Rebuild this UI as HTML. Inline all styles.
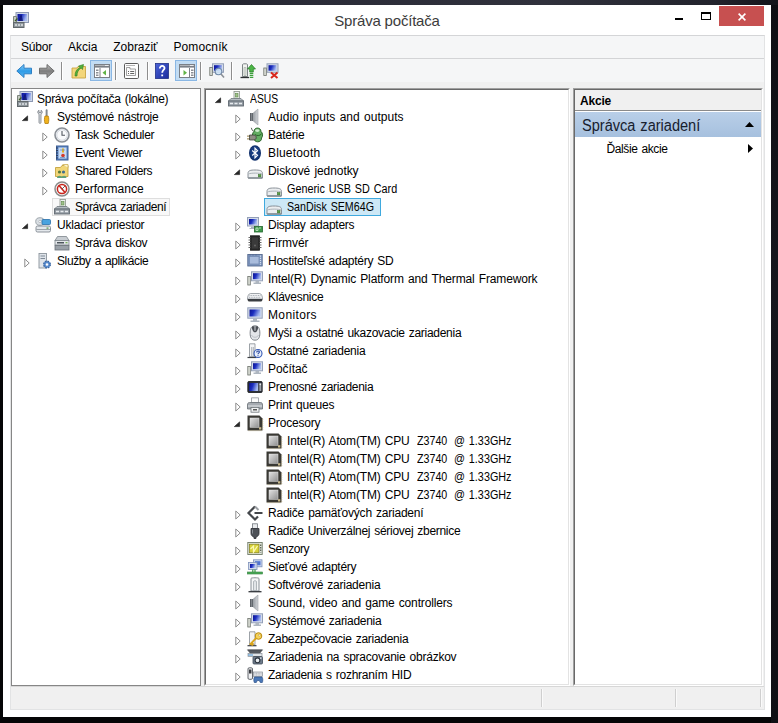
<!DOCTYPE html>
<html lang="sk"><head><meta charset="utf-8"><title>Správa počítača</title>
<style>
html,body{margin:0;padding:0}
body{width:778px;height:723px;overflow:hidden;position:relative;background:#131313;font-family:"Liberation Sans",sans-serif;font-size:12px;color:#000}
body>*,.g>*{position:absolute;box-sizing:border-box}
.g{left:0;top:0;width:0;height:0;overflow:visible}
.bgtex{left:0;top:0;width:778px;height:723px;background:
 linear-gradient(90deg,#0c0c10 0,#1a1b24 12%,#2b2c38 40%,#30313c 70%,#22232c 92%,#14141a 100%) 0 0/778px 5px no-repeat,
 linear-gradient(#0e0e13,#16161d 40%,#0f0f14) 771px 0/7px 723px no-repeat,
 #050506}
.win{left:3px;top:5px;width:768px;height:712px;background:#fff}
.client{left:10px;top:35px;width:755px;height:675px;background:#f0f0f0;border:1px solid #e2e3e4;border-top-color:#d4d5d7}
.menubar{left:11px;top:36px;width:753px;height:22px;background:#f5f6f7}
.menuline{left:11px;top:58px;width:753px;height:1px;background:#d3d4d6}
.toolbar{left:11px;top:59px;width:753px;height:23px;background:#f5f6f7}
.t{white-space:nowrap;line-height:18px;height:18px;font-size:12px;word-spacing:1px}
.mn{font-size:12px}
.ic{position:absolute;overflow:visible}
.pane{background:#fff;border:1px solid #868686}
.pane2{background:#fff;border:1px solid;border-color:#a0a0a0 #fff #fff #a0a0a0}
.pane2>div{width:100%;height:100%;box-sizing:border-box;border:1px solid;border-color:#696969 #e3e3e3 #e3e3e3 #696969}
.selg{background:#f8f8f8;border:1px solid #dedede}
.selb{background:#cde8f6;border:1px solid #3fa9de}
.tbsel{background:#c2dcf3;border:1px solid #8ab7e4}
.tbsep{top:62px;width:1px;height:18px;background:#8d8d8d;box-shadow:1px 0 0 #fff}
.title{left:201px;top:11px;width:372px;text-align:center;font-size:15px;line-height:20px;color:#3c3c3c;white-space:nowrap}
.close{left:719px;top:6px;width:45px;height:20px;background:#c75050}
.ahead{left:575px;top:90px;width:186px;height:22px;background:#f0f0f0;border-bottom:1px solid #fff}
.ahead:after{content:"";position:absolute;left:0;right:0;bottom:0;height:1px;background:#8a8a8a}
.ablue{left:575px;top:112px;width:186px;height:25px;background:linear-gradient(#b9cfe8,#a6c0de)}
.status{left:11px;top:686px;width:753px;height:23px;background:#f0f0f0;border-top:1px solid #d7d7d7}
.stsep{top:689px;width:1px;height:18px;background:#cfcfcf;box-shadow:1px 0 0 #fafafa}
</style></head><body>
<div class="bgtex"></div>
<div class="win"></div>
<svg style="left:0;top:0;width:0;height:0"><defs>
<linearGradient id="gb" x1="0" y1="0" x2="1" y2=".3"><stop offset="0" stop-color="#0c1290"/><stop offset=".45" stop-color="#1c2fc0"/><stop offset="1" stop-color="#a8bcf0"/></linearGradient>
<linearGradient id="gsp" x1="0" y1="0" x2="1" y2="0"><stop offset="0" stop-color="#9a9fa5"/><stop offset="1" stop-color="#d4d7db"/></linearGradient>
<linearGradient id="gg" x1="0" y1="0" x2="1" y2="1"><stop offset="0" stop-color="#e3e3e3"/><stop offset="1" stop-color="#8f8f8f"/></linearGradient>
<linearGradient id="gbl" x1="0" y1="0" x2="0" y2="1"><stop offset="0" stop-color="#8fd3fb"/><stop offset=".5" stop-color="#2f9be6"/><stop offset="1" stop-color="#58b6f2"/></linearGradient>
<linearGradient id="ggr" x1="0" y1="0" x2="0" y2="1"><stop offset="0" stop-color="#c4c4c4"/><stop offset=".5" stop-color="#7d7d7d"/><stop offset="1" stop-color="#a6a6a6"/></linearGradient>
<linearGradient id="gh" x1="0" y1="0" x2="1" y2="1"><stop offset="0" stop-color="#4a63d8"/><stop offset="1" stop-color="#1a2a9c"/></linearGradient>
</defs></svg>
<svg class="ic" style="left:13px;top:12px" width="16" height="16" viewBox="0 0 16 16"><rect x="3" y=".5" width="12.5" height="10" fill="#cfd7e8" stroke="#8d99b3"/><rect x="4.5" y="2" width="9.5" height="7" fill="url(#gb)"/><path d="M6 9c0-3 1-6 2.5-6.5L10 9z" fill="#0d1270" opacity=".8"/><path d="M.5 4.5h3v6h-3z" fill="#c3c9c0" stroke="#7d857c"/><path d="M2 9l2.5-2.5" stroke="#3a5a2a" stroke-width="1.2"/><rect x=".5" y="10.5" width="10.5" height="5" fill="#8f979c" stroke="#62696d"/><path d="M2 13h8" stroke="#dfe4e6" stroke-width="1.5" stroke-dasharray="2 1"/></svg>
<div class="title"><span id="ttl" style="letter-spacing:-0.2px">Správa počítača</span></div>
<div style="left:675px;top:18px;width:8px;height:2px;background:#000"></div>
<div style="left:701px;top:12px;width:10px;height:8px;border:1px solid #000;border-top-width:2px"></div>
<div class="close"></div>
<svg style="left:738px;top:12.5px" width="8" height="8" viewBox="0 0 8 8"><path d="M.6.6l6.8 6.8M7.4.6L.6 7.4" stroke="#fff" stroke-width="1.6"/></svg>
<div class="client"></div>
<div class="menubar"></div><div class="menuline"></div><div class="toolbar"></div>
<div class="g" role="menubar"><span id="mn0" class="t mn" style="left:21px;top:38px;letter-spacing:-0.208px;">Súbor</span><span id="mn1" class="t mn" style="left:68px;top:38px;letter-spacing:-0.011px;">Akcia</span><span id="mn2" class="t mn" style="left:113.3px;top:38px;letter-spacing:-0.031px;">Zobraziť</span><span id="mn3" class="t mn" style="left:173.4px;top:38px;letter-spacing:0.12px;">Pomocník</span></div>
<div class="g" role="toolbar">
<div class="tbsel" style="left:90px;top:60px;width:22px;height:21px"></div>
<div class="tbsel" style="left:175px;top:60px;width:22px;height:21px"></div>
<svg class="ic" style="left:16px;top:63px" width="16" height="16" viewBox="0 0 16 16"><path d="M8 1.5L.8 8 8 14.5v-3.7h7.5V5.2H8z" fill="url(#gbl)" stroke="#2d7fc4" stroke-width="1"/></svg>
<svg class="ic" style="left:39px;top:63px" width="16" height="16" viewBox="0 0 16 16"><path d="M8 1.5L15.2 8 8 14.5v-3.7H.5V5.2H8z" fill="url(#ggr)" stroke="#6d6d6d" stroke-width="1"/></svg>
<svg class="ic" style="left:71px;top:63px" width="16" height="16" viewBox="0 0 16 16"><path d="M1 5h5l1-1.5h7.5v11.5H1z" fill="#f3d67a" stroke="#c9a544" stroke-width=".9"/><path d="M4 13c0-4 1.5-7 5-8.5L7.5 3l5-1.5-1 5-1.3-1.5C7.5 6.5 6 9 6 13z" fill="#55b03c" stroke="#2e7d1e" stroke-width=".6"/></svg>
<svg class="ic" style="left:94px;top:63px" width="16" height="16" viewBox="0 0 16 16"><rect x=".5" y="1.5" width="15" height="13" fill="#fff" stroke="#7a7f86" stroke-width="1"/><path d="M1 3.5h14" stroke="#7a7f86" stroke-width="2.2"/><path d="M11 2.5h3.5" stroke="#e8eaec" stroke-width="1"/><path d="M6 5v9" stroke="#7a7f86" stroke-width="1"/><path d="M2 6.5h2.5v1.5H2zM2 9h2.5v1.5H2zM2 11.5h2.5v1.5H2z" fill="#8b9096"/><path d="M12 7v5.5L8.5 9.8z" fill="#5fb346"/></svg>
<svg class="ic" style="left:124px;top:63px" width="16" height="16" viewBox="0 0 16 16"><rect x=".5" y=".5" width="14" height="15" rx="1.2" fill="#fff" stroke="#5c5c5c"/><path d="M2 2.5h9" stroke="#b4b4b4"/><path d="M2.5 12.5v-8h3.5v1.5h5.5v6.5z" fill="#fbfbfb" stroke="#8a8a8a" stroke-width=".8"/><path d="M4 8.5h1M6.2 8.5h4M4 10.5h1M6.2 10.5h4" stroke="#666"/></svg>
<svg class="ic" style="left:154px;top:63px" width="16" height="16" viewBox="0 0 16 16"><rect x="1.5" y=".5" width="13" height="15" fill="url(#gh)" stroke="#1f2f86" stroke-width=".8"/><path d="M5.8 5.5c0-3.5 5-3.2 4.7-.2C10.3 7 8.3 7.2 8.2 9.8M8.2 11.5v1.8" stroke="#fff" stroke-width="1.8" fill="none"/></svg>
<svg class="ic" style="left:179px;top:63px" width="16" height="16" viewBox="0 0 16 16"><rect x=".5" y="1.5" width="15" height="13" fill="#fff" stroke="#7a7f86" stroke-width="1"/><path d="M1 3.5h14" stroke="#7a7f86" stroke-width="2.2"/><path d="M11 2.5h3.5" stroke="#e8eaec" stroke-width="1"/><path d="M10.5 5v9" stroke="#7a7f86" stroke-width="1"/><path d="M12 6.5h2.5v1.5H12zM12 9h2.5v1.5H12zM12 11.5h2.5v1.5H12z" fill="#8b9096"/><path d="M4.5 7v5.5L8 9.8z" fill="#5fb346"/></svg>
<svg class="ic" style="left:209px;top:63px" width="16" height="16" viewBox="0 0 16 16"><rect x="3.5" y=".8" width="11" height="8.5" fill="#d5dcea" stroke="#94a0b8"/><rect x="5" y="2.2" width="8" height="5.5" fill="url(#gb)"/><rect x=".8" y="4.5" width="2.5" height="8" fill="#dcdfd8" stroke="#6c716a" stroke-width=".8"/><circle cx="9.5" cy="8.5" r="3.3" fill="#cfe4f7" fill-opacity=".85" stroke="#6f89a8" stroke-width="1.1"/><path d="M12 11l3 3.5" stroke="#8a8f96" stroke-width="1.6"/></svg>
<svg class="ic" style="left:240px;top:63px" width="16" height="16" viewBox="0 0 16 16"><path d="M2.5 1.5c0-1 5-1 5 0v12h-5z" fill="#f1f3f1" stroke="#70787a" stroke-width=".9"/><path d="M4 4.5h2v8H4z" fill="#dfe3df" stroke="#9aa29a" stroke-width=".5"/><path d="M.5 14.5h8.5" stroke="#2e3134" stroke-width="1.3"/><path d="M11.5 1.5L7.5 6h2.2v3h3.6V6h2.2z" fill="#4cb648" stroke="#277a26" stroke-width=".7"/><path d="M9.7 10.3h3.6M9.7 12.3h3.6M9.7 14.3h3.6" stroke="#3aa03a" stroke-width="1.2"/></svg>
<svg class="ic" style="left:263px;top:63px" width="16" height="16" viewBox="0 0 16 16"><rect x="4" y=".8" width="11" height="8.5" fill="#d5dcea" stroke="#94a0b8"/><rect x="5.5" y="2.2" width="8" height="5.5" fill="url(#gb)"/><rect x=".8" y="5" width="2.5" height="7.5" fill="#dcdfd8" stroke="#6c716a" stroke-width=".8"/><path d="M8 9.5l6.5 5.5M14.5 9.5L8 15" stroke="#d8261c" stroke-width="2"/></svg>
<div class="tbsep" style="left:61px"></div>
<div class="tbsep" style="left:115px"></div>
<div class="tbsep" style="left:147px"></div>
<div class="tbsep" style="left:200px"></div>
<div class="tbsep" style="left:231px"></div>
</div>
<div class="pane" style="left:11px;top:88px;width:190px;height:598px"></div>
<div class="pane2" style="left:204px;top:88px;width:366px;height:598px"><div></div></div>
<div class="pane2" style="left:573px;top:88px;width:190px;height:598px"><div></div></div>
<div class="ahead"></div>
<span id="ak" class="t" style="left:580px;top:92px;letter-spacing:-0.208px;font-weight:bold;">Akcie</span>
<div class="ablue"></div>
<span id="ab" class="t" style="left:581.5px;top:116.5px;transform:scaleX(0.91);transform-origin:0 0;font-size:16px;color:#17202e;">Správca zariadení</span>
<svg style="left:745px;top:122px" width="9" height="5" viewBox="0 0 9 5"><path d="M0 5L4.5 0 9 5z" fill="#000"/></svg>
<span id="da" class="t" style="left:606.5px;top:140px;letter-spacing:-0.391px;">Ďalšie akcie</span>
<svg style="left:748px;top:144px" width="5" height="9" viewBox="0 0 5 9"><path d="M0 0l5 4.5-5 4.5z" fill="#000"/></svg>
<div class="g" role="tree">
<svg class="ic" style="left:17px;top:91px" width="16" height="16" viewBox="0 0 16 16"><rect x="3" y=".5" width="12.5" height="10" fill="#cfd7e8" stroke="#8d99b3"/><rect x="4.5" y="2" width="9.5" height="7" fill="url(#gb)"/><path d="M6 9c0-3 1-6 2.5-6.5L10 9z" fill="#0d1270" opacity=".8"/><path d="M.5 4.5h3v6h-3z" fill="#c3c9c0" stroke="#7d857c"/><path d="M2 9l2.5-2.5" stroke="#3a5a2a" stroke-width="1.2"/><rect x=".5" y="10.5" width="10.5" height="5" fill="#8f979c" stroke="#62696d"/><path d="M2 13h8" stroke="#dfe4e6" stroke-width="1.5" stroke-dasharray="2 1"/></svg>
<span id="l0" class="t" style="left:37px;top:90px;letter-spacing:-0.27px;">Správa počítača (lokálne)</span>
<svg class="ic" style="left:22.3px;top:115.3px" width="6" height="6" viewBox="0 0 6 6"><path d="M5.6.9v4.7H.4z" fill="#262626" stroke="#262626" stroke-width=".7" stroke-linejoin="round"/></svg>
<svg class="ic" style="left:36px;top:109px" width="16" height="16" viewBox="0 0 16 16"><path d="M3 1.2c-1.6.8-1.8 3 0 4v8.3c0 1.2 2 1.2 2 0V5.2c1.8-1 1.6-3.2 0-4v2.3H3z" fill="#d6dade" stroke="#7c8288" stroke-width=".8"/><path d="M10 .8h1.2v6H10z" fill="#9aa0a6" stroke="#6a7076" stroke-width=".6"/><path d="M9 7h3.2c.8 2 .8 5 0 7.5H9c-.8-2.5-.8-5.5 0-7.5z" fill="#f0b21c" stroke="#b47c0a" stroke-width=".8"/></svg>
<span id="l1" class="t" style="left:57px;top:108px;letter-spacing:-0.282px;">Systémové nástroje</span>
<svg class="ic" style="left:42px;top:131.5px" width="7" height="10" viewBox="0 0 7 10"><path d="M.8 1l4.4 4-4.4 4z" fill="#fff" stroke="#8e8e8e" stroke-width="1" stroke-linejoin="round"/></svg>
<svg class="ic" style="left:54px;top:127px" width="16" height="16" viewBox="0 0 16 16"><circle cx="8" cy="8" r="7" fill="#eef1f5" stroke="#8a8f96" stroke-width="1.6"/><circle cx="8" cy="8" r="5.2" fill="#f9fafc" stroke="#c5cad2" stroke-width=".6"/><path d="M8 4v4.2h3" stroke="#50565e" stroke-width="1.1" fill="none"/></svg>
<span id="l2" class="t" style="left:75px;top:126px;letter-spacing:-0.265px;">Task Scheduler</span>
<svg class="ic" style="left:42px;top:149.5px" width="7" height="10" viewBox="0 0 7 10"><path d="M.8 1l4.4 4-4.4 4z" fill="#fff" stroke="#8e8e8e" stroke-width="1" stroke-linejoin="round"/></svg>
<svg class="ic" style="left:54px;top:145px" width="16" height="16" viewBox="0 0 16 16"><rect x="2.5" y="1" width="11.5" height="14" fill="#5b86c6" stroke="#3d5f96"/><rect x="4.5" y="2.5" width="8" height="11" fill="#c9dbf2"/><path d="M2 3h2M2 5.5h2M2 8h2M2 10.5h2M2 13h2" stroke="#2d3f5e" stroke-width="1"/><rect x="8" y="3.5" width="2" height="4" fill="#e9b21a"/><circle cx="9" cy="10.5" r="1.8" fill="#d43a2a"/><path d="M6 5h5M6 12.5h5" stroke="#6f8fbf" stroke-width=".8"/></svg>
<span id="l3" class="t" style="left:75px;top:144px;letter-spacing:-0.353px;">Event Viewer</span>
<svg class="ic" style="left:42px;top:167.5px" width="7" height="10" viewBox="0 0 7 10"><path d="M.8 1l4.4 4-4.4 4z" fill="#fff" stroke="#8e8e8e" stroke-width="1" stroke-linejoin="round"/></svg>
<svg class="ic" style="left:54px;top:163px" width="16" height="16" viewBox="0 0 16 16"><path d="M1.5 4.5h5l1.5-2h6v11h-12.5z" fill="#f1d678" stroke="#c4a340" stroke-width=".9"/><path d="M8.5 1.5h5.5v3" fill="#fbf3cf" stroke="#c4a340" stroke-width=".7"/><circle cx="5.5" cy="9" r="1.6" fill="#5a7a3a"/><circle cx="9.5" cy="9" r="1.6" fill="#3f6f8f"/><path d="M3 15c0-3 5-3 5 0zM7.5 15c0-3 5-3 5 0z" fill="#5fa07a"/></svg>
<span id="l4" class="t" style="left:75px;top:162px;letter-spacing:-0.419px;">Shared Folders</span>
<svg class="ic" style="left:42px;top:185.5px" width="7" height="10" viewBox="0 0 7 10"><path d="M.8 1l4.4 4-4.4 4z" fill="#fff" stroke="#8e8e8e" stroke-width="1" stroke-linejoin="round"/></svg>
<svg class="ic" style="left:54px;top:181px" width="16" height="16" viewBox="0 0 16 16"><circle cx="8" cy="8" r="7" fill="#f4f4f4" stroke="#8c8c8c" stroke-width="1.5"/><circle cx="8" cy="8" r="4.6" fill="#fff" stroke="#c8251c" stroke-width="1.5"/><path d="M5 4.5l6 7" stroke="#c8251c" stroke-width="1.6"/><path d="M8 8l3-3" stroke="#555" stroke-width=".9"/></svg>
<span id="l5" class="t" style="left:75px;top:180px;letter-spacing:-0.01px;">Performance</span>
<div class="selg" style="left:52px;top:198px;width:118px;height:18px"></div>
<svg class="ic" style="left:54px;top:199px" width="16" height="16" viewBox="0 0 16 16"><rect x="6" y=".5" width="5.5" height="7" fill="#eef1ee" stroke="#8a938a" stroke-width=".8"/><rect x="7.5" y="2.5" width="2.5" height="3.5" fill="#9fc08a" stroke="#5f8a4a" stroke-width=".6"/><path d="M3 7.5h10l2.5 2.5h-15z" fill="#b5bcc2" stroke="#70787e" stroke-width=".8"/><rect x=".5" y="10" width="15" height="5" fill="#9098a0" stroke="#626a72" stroke-width=".9"/><path d="M2 12.5h12" stroke="#e8ecef" stroke-width="1.3" stroke-dasharray="3 1.5"/></svg>
<span id="l6" class="t" style="left:75px;top:198px;letter-spacing:-0.383px;">Správca zariadení</span>
<svg class="ic" style="left:22.3px;top:223.3px" width="6" height="6" viewBox="0 0 6 6"><path d="M5.6.9v4.7H.4z" fill="#262626" stroke="#262626" stroke-width=".7" stroke-linejoin="round"/></svg>
<svg class="ic" style="left:35px;top:217px" width="16" height="16" viewBox="0 0 16 16"><ellipse cx="5" cy="4.5" rx="4.3" ry="3.8" fill="#d9dee3" stroke="#8d959c" stroke-width=".8"/><circle cx="5" cy="4.5" r="1.2" fill="#fff" stroke="#8d959c" stroke-width=".5"/><rect x="7" y="2.5" width="8.5" height="5" rx="1" fill="#4aa3df" stroke="#2a6fa8" stroke-width=".8"/><rect x="1" y="9" width="14.5" height="6" rx="1.5" fill="#e4e8ec" stroke="#7f878f" stroke-width=".9"/><path d="M1.5 12.5h13.5" stroke="#8b939b" stroke-width=".8"/><rect x="11.5" y="10.5" width="2" height="1.2" fill="#5c9a4a"/></svg>
<span id="l7" class="t" style="left:57px;top:216px;letter-spacing:-0.215px;">Ukladací priestor</span>
<svg class="ic" style="left:54px;top:235px" width="16" height="16" viewBox="0 0 16 16"><path d="M3.5 1.5h9l2.5 4h-14z" fill="#c8cdd2" stroke="#7d858c" stroke-width=".8"/><rect x="1" y="5.5" width="14" height="4.5" fill="#e3e6e9" stroke="#7d858c" stroke-width=".8"/><rect x="3" y="7" width="7" height="1.5" fill="#4d555c"/><rect x="11.5" y="7" width="2" height="1.3" fill="#76b05c"/><rect x="1" y="10.5" width="14" height="4.5" fill="#9aa1a8" stroke="#6a7279" stroke-width=".8"/></svg>
<span id="l8" class="t" style="left:75px;top:234px;letter-spacing:-0.315px;">Správa diskov</span>
<svg class="ic" style="left:23.5px;top:257.5px" width="7" height="10" viewBox="0 0 7 10"><path d="M.8 1l4.4 4-4.4 4z" fill="#fff" stroke="#8e8e8e" stroke-width="1" stroke-linejoin="round"/></svg>
<svg class="ic" style="left:36px;top:253px" width="16" height="16" viewBox="0 0 16 16"><rect x="3" y=".5" width="7.5" height="14.5" fill="#dfe4ea" stroke="#8c949c" stroke-width=".9"/><path d="M4.5 3h4.5M4.5 5.5h4.5" stroke="#7f8a96" stroke-width="1"/><circle cx="11" cy="11.5" r="3.3" fill="#5b8ed0" stroke="#3b68a4" stroke-width="1.4" stroke-dasharray="1.6 1"/><circle cx="11" cy="11.5" r="1.2" fill="#fff"/></svg>
<span id="l9" class="t" style="left:57px;top:252px;letter-spacing:-0.38px;">Služby a aplikácie</span>
</div>
<div class="g" role="tree">
<svg class="ic" style="left:214.8px;top:97.3px" width="6" height="6" viewBox="0 0 6 6"><path d="M5.6.9v4.7H.4z" fill="#262626" stroke="#262626" stroke-width=".7" stroke-linejoin="round"/></svg>
<svg class="ic" style="left:228px;top:91px" width="16" height="16" viewBox="0 0 16 16"><rect x="6" y=".5" width="5.5" height="7" fill="#eef1ee" stroke="#8a938a" stroke-width=".8"/><rect x="7.5" y="2.5" width="2.5" height="3.5" fill="#9fc08a" stroke="#5f8a4a" stroke-width=".6"/><path d="M3 7.5h10l2.5 2.5h-15z" fill="#b5bcc2" stroke="#70787e" stroke-width=".8"/><rect x=".5" y="10" width="15" height="5" fill="#9098a0" stroke="#626a72" stroke-width=".9"/><path d="M2 12.5h12" stroke="#e8ecef" stroke-width="1.3" stroke-dasharray="3 1.5"/></svg>
<span id="m0" class="t" style="left:249.5px;top:90px;transform:scaleX(0.86);transform-origin:0 0;">ASUS</span>
<svg class="ic" style="left:235px;top:113.5px" width="7" height="10" viewBox="0 0 7 10"><path d="M.8 1l4.4 4-4.4 4z" fill="#fff" stroke="#8e8e8e" stroke-width="1" stroke-linejoin="round"/></svg>
<svg class="ic" style="left:247px;top:109px" width="16" height="16" viewBox="0 0 16 16"><path d="M3 4h3.2v8H3z" fill="#5d6268"/><path d="M6.2 4L11 0v16L6.2 12z" fill="url(#gsp)" stroke="#8d9299" stroke-width=".5"/><path d="M4.5 4v8" stroke="#8a8f95" stroke-width=".8"/></svg>
<span id="m1" class="t" style="left:268px;top:108px;letter-spacing:0.021px;">Audio inputs and outputs</span>
<svg class="ic" style="left:235px;top:131.5px" width="7" height="10" viewBox="0 0 7 10"><path d="M.8 1l4.4 4-4.4 4z" fill="#fff" stroke="#8e8e8e" stroke-width="1" stroke-linejoin="round"/></svg>
<svg class="ic" style="left:247px;top:127px" width="16" height="16" viewBox="0 0 16 16"><path d="M4.3.8c.4 1.6 1 2.6 2.2 3.6" stroke="#2a3a2a" stroke-width=".8" fill="none"/><path d="M7 4.5c0-4.6 7-4.6 7 0 2 1.5 2 5 .5 6.5.5 5-7.5 5-7.5.5C5 10 5 6 7 4.5z" fill="#62ad62" stroke="#215a21" stroke-width=".9"/><ellipse cx="10.3" cy="3.6" rx="2.2" ry="1.3" fill="#cdeccd"/><path d="M8 7.5c2 1.5 4.5 1.5 6.5-.5" stroke="#215a21" stroke-width=".9" fill="none"/><path d="M0 9.2h3M0 11.8h3" stroke="#a8966a" stroke-width="1.2"/><path d="M2.5 8h3.5c2.2 0 3.2 1 3.2 2.5S8.2 13 6 13H2.5z" fill="#8e8e84" stroke="#34342e" stroke-width=".7"/></svg>
<span id="m2" class="t" style="left:268px;top:126px;letter-spacing:-0.239px;">Batérie</span>
<svg class="ic" style="left:235px;top:149.5px" width="7" height="10" viewBox="0 0 7 10"><path d="M.8 1l4.4 4-4.4 4z" fill="#fff" stroke="#8e8e8e" stroke-width="1" stroke-linejoin="round"/></svg>
<svg class="ic" style="left:247px;top:145px" width="16" height="16" viewBox="0 0 16 16"><ellipse cx="8" cy="8" rx="6" ry="7.8" fill="#10306c"/><ellipse cx="8" cy="7.5" rx="4.8" ry="6.3" fill="#173c80"/><path d="M5.2 5.5l5.3 4.8L8 12.8V3.2l2.5 2.5-5.3 4.8" stroke="#fff" stroke-width="1.15" fill="none" stroke-linejoin="miter"/></svg>
<span id="m3" class="t" style="left:268px;top:144px;letter-spacing:0.173px;">Bluetooth</span>
<svg class="ic" style="left:233.8px;top:169.3px" width="6" height="6" viewBox="0 0 6 6"><path d="M5.6.9v4.7H.4z" fill="#262626" stroke="#262626" stroke-width=".7" stroke-linejoin="round"/></svg>
<svg class="ic" style="left:247px;top:163px" width="16" height="16" viewBox="0 0 16 16"><path d="M1 10.5c0-3 2.5-3.5 7-3.5s7.5.5 7.5 3.5v4.5H1z" fill="#eceef0" stroke="#7f878e" stroke-width=".9"/><path d="M1.5 11c2-1.2 11.5-1.2 13.5 0" stroke="#a4abb2" stroke-width=".9" fill="none"/><rect x="1" y="14.3" width="14.5" height="1.5" rx=".7" fill="#858d94"/><rect x="11.3" y="11.5" width="2.7" height="2.4" fill="#5aa046" stroke="#3a6f2c" stroke-width=".5"/></svg>
<span id="m4" class="t" style="left:268px;top:162px;letter-spacing:-0.075px;">Diskové jednotky</span>
<svg class="ic" style="left:266px;top:181px" width="16" height="16" viewBox="0 0 16 16"><path d="M1 10.5c0-3 2.5-3.5 7-3.5s7.5.5 7.5 3.5v4.5H1z" fill="#eceef0" stroke="#7f878e" stroke-width=".9"/><path d="M1.5 11c2-1.2 11.5-1.2 13.5 0" stroke="#a4abb2" stroke-width=".9" fill="none"/><rect x="1" y="14.3" width="14.5" height="1.5" rx=".7" fill="#858d94"/><rect x="11.3" y="11.5" width="2.7" height="2.4" fill="#5aa046" stroke="#3a6f2c" stroke-width=".5"/></svg>
<span id="m5" class="t" style="left:287px;top:180px;transform:scaleX(0.9);transform-origin:0 0;">Generic USB SD Card</span>
<div class="selb" style="left:264px;top:198px;width:117px;height:18px"></div>
<svg class="ic" style="left:266px;top:199px" width="16" height="16" viewBox="0 0 16 16"><path d="M1 10.5c0-3 2.5-3.5 7-3.5s7.5.5 7.5 3.5v4.5H1z" fill="#eceef0" stroke="#7f878e" stroke-width=".9"/><path d="M1.5 11c2-1.2 11.5-1.2 13.5 0" stroke="#a4abb2" stroke-width=".9" fill="none"/><rect x="1" y="14.3" width="14.5" height="1.5" rx=".7" fill="#858d94"/><rect x="11.3" y="11.5" width="2.7" height="2.4" fill="#5aa046" stroke="#3a6f2c" stroke-width=".5"/></svg>
<span id="m6" class="t" style="left:287px;top:198px;transform:scaleX(0.89);transform-origin:0 0;">SanDisk SEM64G</span>
<svg class="ic" style="left:235px;top:221.5px" width="7" height="10" viewBox="0 0 7 10"><path d="M.8 1l4.4 4-4.4 4z" fill="#fff" stroke="#8e8e8e" stroke-width="1" stroke-linejoin="round"/></svg>
<svg class="ic" style="left:247px;top:217px" width="16" height="16" viewBox="0 0 16 16"><rect x=".5" y=".5" width="11" height="8.5" fill="#d5dcea" stroke="#94a0b8"/><rect x="2" y="2" width="8" height="5.5" fill="url(#gb)"/><path d="M4 9.5h4v1.5H4zM2.5 11h7v1h-7z" fill="#aab2bc"/><rect x="7.5" y="9.5" width="8" height="5.5" fill="#3f9a4c" stroke="#25662f" stroke-width=".8"/><path d="M9 11h2v2.5H9zM12 11h2" stroke="#cfeecf" stroke-width=".8" fill="none"/></svg>
<span id="m7" class="t" style="left:268px;top:216px;letter-spacing:-0.253px;">Display adapters</span>
<svg class="ic" style="left:235px;top:239.5px" width="7" height="10" viewBox="0 0 7 10"><path d="M.8 1l4.4 4-4.4 4z" fill="#fff" stroke="#8e8e8e" stroke-width="1" stroke-linejoin="round"/></svg>
<svg class="ic" style="left:247px;top:235px" width="16" height="16" viewBox="0 0 16 16"><rect x="3.5" y=".8" width="9" height="14.4" fill="#2a2a2a" stroke="#111" stroke-width=".8"/><path d="M1.5 2.5h2M1.5 5h2M1.5 7.5h2M1.5 10h2M1.5 12.5h2M12.5 2.5h2M12.5 5h2M12.5 7.5h2M12.5 10h2M12.5 12.5h2" stroke="#666" stroke-width="1.2"/><rect x="5" y="2.5" width="6" height="11" fill="#3a3a3a"/><circle cx="8" cy="10.5" r=".9" fill="#6a6a6a"/></svg>
<span id="m8" class="t" style="left:268px;top:234px;letter-spacing:-0.012px;">Firmvér</span>
<svg class="ic" style="left:235px;top:257.5px" width="7" height="10" viewBox="0 0 7 10"><path d="M.8 1l4.4 4-4.4 4z" fill="#fff" stroke="#8e8e8e" stroke-width="1" stroke-linejoin="round"/></svg>
<svg class="ic" style="left:247px;top:253px" width="16" height="16" viewBox="0 0 16 16"><rect x=".8" y="1.5" width="14.4" height="11.5" fill="#8098c0" stroke="#566a90" stroke-width=".9"/><rect x="2.5" y="3.5" width="9.5" height="7.5" fill="#a9bcdc" stroke="#6f86b0" stroke-width=".7"/><path d="M13.5 2.5v9.5" stroke="#d5deee" stroke-width="1.2" stroke-dasharray="1.2 1"/><path d="M3 1v1.5M6 1v1.5M9 1v1.5" stroke="#566a90" stroke-width="1"/></svg>
<span id="m9" class="t" style="left:268px;top:252px;letter-spacing:-0.271px;">Hostiteľské adaptéry SD</span>
<svg class="ic" style="left:235px;top:275.5px" width="7" height="10" viewBox="0 0 7 10"><path d="M.8 1l4.4 4-4.4 4z" fill="#fff" stroke="#8e8e8e" stroke-width="1" stroke-linejoin="round"/></svg>
<svg class="ic" style="left:247px;top:271px" width="16" height="16" viewBox="0 0 16 16"><rect x="4.5" y=".8" width="11" height="9" fill="#d5dcea" stroke="#94a0b8"/><rect x="6" y="2.2" width="8" height="6" fill="url(#gb)"/><path d="M8.5 10h3.5v1.5H8.5zM6.5 11.5h7.5v1.5h-7.5z" fill="#aeb6c0"/><rect x=".8" y="5.5" width="2.5" height="8.5" fill="#dcdfd8" stroke="#6c716a" stroke-width=".8"/></svg>
<span id="m10" class="t" style="left:268px;top:270px;letter-spacing:-0.143px;">Intel(R) Dynamic Platform and Thermal Framework</span>
<svg class="ic" style="left:235px;top:293.5px" width="7" height="10" viewBox="0 0 7 10"><path d="M.8 1l4.4 4-4.4 4z" fill="#fff" stroke="#8e8e8e" stroke-width="1" stroke-linejoin="round"/></svg>
<svg class="ic" style="left:247px;top:289px" width="16" height="16" viewBox="0 0 16 16"><path d="M3.5 4.5h9c2 0 3 3 3 5.5H.5c0-2.5 1-5.5 3-5.5z" fill="#f1f2f4" stroke="#8a9097" stroke-width=".8"/><path d="M2.5 6.5h11M2 8.3h12" stroke="#aab0b7" stroke-width="1" stroke-dasharray="1 .7"/><path d="M.5 10h15c0 2-1 2.5-2 2.5h-11c-1 0-2-.5-2-2.5z" fill="#3a3d41"/></svg>
<span id="m11" class="t" style="left:268px;top:288px;letter-spacing:-0.27px;">Klávesnice</span>
<svg class="ic" style="left:235px;top:311.5px" width="7" height="10" viewBox="0 0 7 10"><path d="M.8 1l4.4 4-4.4 4z" fill="#fff" stroke="#8e8e8e" stroke-width="1" stroke-linejoin="round"/></svg>
<svg class="ic" style="left:247px;top:307px" width="16" height="16" viewBox="0 0 16 16"><rect x=".8" y=".8" width="14.4" height="10.4" fill="#d5dcea" stroke="#94a0b8"/><rect x="2.5" y="2.5" width="11" height="7" fill="url(#gb)"/><path d="M6 11.5h4v2H6zM3.5 13.5h9v1.5h-9z" fill="#aeb6c0"/></svg>
<span id="m12" class="t" style="left:268px;top:306px;letter-spacing:0.369px;">Monitors</span>
<svg class="ic" style="left:235px;top:329.5px" width="7" height="10" viewBox="0 0 7 10"><path d="M.8 1l4.4 4-4.4 4z" fill="#fff" stroke="#8e8e8e" stroke-width="1" stroke-linejoin="round"/></svg>
<svg class="ic" style="left:247px;top:325px" width="16" height="16" viewBox="0 0 16 16"><path d="M8 .8c3.4 0 4.6 2.4 4.8 6 .3 4-.4 8.4-4.8 8.4S2.9 10.8 3.2 6.8C3.4 3.2 4.6.8 8 .8z" fill="#e4e6e9" stroke="#70767d" stroke-width=".9"/><path d="M5 1.6C4.6 4.2 6.3 7.2 8 7.2s3.4-3 3-5.6C10 1 6 1 5 1.6z" fill="#4a4e54"/><path d="M8 1.2v4.6" stroke="#d0d4d8" stroke-width="1"/><path d="M4.5 10c1 3 6 3 7 0" stroke="#b4b9bf" stroke-width=".8" fill="none"/></svg>
<span id="m13" class="t" style="left:268px;top:324px;letter-spacing:-0.282px;">Myši a ostatné ukazovacie zariadenia</span>
<svg class="ic" style="left:235px;top:347.5px" width="7" height="10" viewBox="0 0 7 10"><path d="M.8 1l4.4 4-4.4 4z" fill="#fff" stroke="#8e8e8e" stroke-width="1" stroke-linejoin="round"/></svg>
<svg class="ic" style="left:247px;top:343px" width="16" height="16" viewBox="0 0 16 16"><path d="M2.5.8h5.5v13h-5.5z" fill="#f3f4f6" stroke="#858b92" stroke-width=".8"/><path d="M4.5 4v9.5h2V4" fill="#d9dcdf" stroke="#9aa0a6" stroke-width=".6"/><path d="M.5 14.5h9" stroke="#3a3d41" stroke-width="1.2"/><circle cx="11" cy="10.5" r="4" fill="#eaf0fb" stroke="#3559b5" stroke-width="1.1"/><path d="M9.7 9.4c0-2 2.8-1.8 2.6-.2-.1.9-1.3 1-1.3 2M11 12.3v1" stroke="#2344a0" stroke-width="1.1" fill="none"/></svg>
<span id="m14" class="t" style="left:268px;top:342px;letter-spacing:-0.243px;">Ostatné zariadenia</span>
<svg class="ic" style="left:235px;top:365.5px" width="7" height="10" viewBox="0 0 7 10"><path d="M.8 1l4.4 4-4.4 4z" fill="#fff" stroke="#8e8e8e" stroke-width="1" stroke-linejoin="round"/></svg>
<svg class="ic" style="left:247px;top:361px" width="16" height="16" viewBox="0 0 16 16"><rect x="4.5" y=".8" width="11" height="9" fill="#d5dcea" stroke="#94a0b8"/><rect x="6" y="2.2" width="8" height="6" fill="url(#gb)"/><path d="M8.5 10h3.5v1.5H8.5zM6.5 11.5h7.5v1.5h-7.5z" fill="#aeb6c0"/><rect x=".8" y="5.5" width="2.5" height="8.5" fill="#dcdfd8" stroke="#6c716a" stroke-width=".8"/></svg>
<span id="m15" class="t" style="left:268px;top:360px;letter-spacing:-0.072px;">Počítač</span>
<svg class="ic" style="left:235px;top:383.5px" width="7" height="10" viewBox="0 0 7 10"><path d="M.8 1l4.4 4-4.4 4z" fill="#fff" stroke="#8e8e8e" stroke-width="1" stroke-linejoin="round"/></svg>
<svg class="ic" style="left:247px;top:379px" width="16" height="16" viewBox="0 0 16 16"><rect x=".8" y="2.5" width="14.4" height="11" rx="1" fill="#2d3038" stroke="#14161a" stroke-width=".8"/><rect x="2.2" y="4" width="9" height="8" fill="url(#gb)"/><rect x="12.3" y="4" width="2" height="8" fill="#9aa0a8"/><circle cx="13.3" cy="5.5" r=".8" fill="#e8e8e8"/></svg>
<span id="m16" class="t" style="left:268px;top:378px;letter-spacing:-0.304px;">Prenosné zariadenia</span>
<svg class="ic" style="left:235px;top:401.5px" width="7" height="10" viewBox="0 0 7 10"><path d="M.8 1l4.4 4-4.4 4z" fill="#fff" stroke="#8e8e8e" stroke-width="1" stroke-linejoin="round"/></svg>
<svg class="ic" style="left:247px;top:397px" width="16" height="16" viewBox="0 0 16 16"><path d="M4.5.8h7v5h-7z" fill="#fbfbfb" stroke="#90969c" stroke-width=".8"/><path d="M2.5 5.5h11c1.5 0 2 1 2 2.5v4h-15v-4c0-1.5.5-2.5 2-2.5z" fill="#a6abb1" stroke="#666c72" stroke-width=".8"/><path d="M1 9h14" stroke="#e0e3e6" stroke-width="1"/><rect x="4" y="10.5" width="8" height="4.7" fill="#f2f3f4" stroke="#6f757b" stroke-width=".8"/><path d="M6 12.8h4" stroke="#333" stroke-width="1.2"/></svg>
<span id="m17" class="t" style="left:268px;top:396px;letter-spacing:-0.163px;">Print queues</span>
<svg class="ic" style="left:233.8px;top:421.3px" width="6" height="6" viewBox="0 0 6 6"><path d="M5.6.9v4.7H.4z" fill="#262626" stroke="#262626" stroke-width=".7" stroke-linejoin="round"/></svg>
<svg class="ic" style="left:247px;top:415px" width="16" height="16" viewBox="0 0 16 16"><path d="M.5.5h12l3 3v12H.5z" fill="#3a3934"/><rect x="3" y="3" width="9" height="9.3" fill="url(#gg)" stroke="#e6e6e6" stroke-width=".5"/><rect x="12" y="12.2" width="2.3" height="2.3" fill="#c9b98a"/><path d="M1.5 15.7h13M15.7 4v11" stroke="#b5a775" stroke-width=".7" stroke-dasharray="1 1"/></svg>
<span id="m18" class="t" style="left:268px;top:414px;letter-spacing:-0.179px;">Procesory</span>
<svg class="ic" style="left:266px;top:433px" width="16" height="16" viewBox="0 0 16 16"><path d="M.5.5h12l3 3v12H.5z" fill="#3a3934"/><rect x="3" y="3" width="9" height="9.3" fill="url(#gg)" stroke="#e6e6e6" stroke-width=".5"/><rect x="12" y="12.2" width="2.3" height="2.3" fill="#c9b98a"/><path d="M1.5 15.7h13M15.7 4v11" stroke="#b5a775" stroke-width=".7" stroke-dasharray="1 1"/></svg>
<span id="m19a" class="t" style="left:287px;top:432px;letter-spacing:-0.161px;">Intel(R) Atom(TM) CPU</span>
<span id="m19b" class="t" style="left:417px;top:432px;transform:scaleX(0.89);transform-origin:0 0;">Z3740</span>
<span id="m19c" class="t" style="left:453.5px;top:432px;transform:scaleX(0.9);transform-origin:0 0;">@ 1.33GHz</span>
<svg class="ic" style="left:266px;top:451px" width="16" height="16" viewBox="0 0 16 16"><path d="M.5.5h12l3 3v12H.5z" fill="#3a3934"/><rect x="3" y="3" width="9" height="9.3" fill="url(#gg)" stroke="#e6e6e6" stroke-width=".5"/><rect x="12" y="12.2" width="2.3" height="2.3" fill="#c9b98a"/><path d="M1.5 15.7h13M15.7 4v11" stroke="#b5a775" stroke-width=".7" stroke-dasharray="1 1"/></svg>
<span id="m20a" class="t" style="left:287px;top:450px;letter-spacing:-0.161px;">Intel(R) Atom(TM) CPU</span>
<span id="m20b" class="t" style="left:417px;top:450px;transform:scaleX(0.89);transform-origin:0 0;">Z3740</span>
<span id="m20c" class="t" style="left:453.5px;top:450px;transform:scaleX(0.9);transform-origin:0 0;">@ 1.33GHz</span>
<svg class="ic" style="left:266px;top:469px" width="16" height="16" viewBox="0 0 16 16"><path d="M.5.5h12l3 3v12H.5z" fill="#3a3934"/><rect x="3" y="3" width="9" height="9.3" fill="url(#gg)" stroke="#e6e6e6" stroke-width=".5"/><rect x="12" y="12.2" width="2.3" height="2.3" fill="#c9b98a"/><path d="M1.5 15.7h13M15.7 4v11" stroke="#b5a775" stroke-width=".7" stroke-dasharray="1 1"/></svg>
<span id="m21a" class="t" style="left:287px;top:468px;letter-spacing:-0.161px;">Intel(R) Atom(TM) CPU</span>
<span id="m21b" class="t" style="left:417px;top:468px;transform:scaleX(0.89);transform-origin:0 0;">Z3740</span>
<span id="m21c" class="t" style="left:453.5px;top:468px;transform:scaleX(0.9);transform-origin:0 0;">@ 1.33GHz</span>
<svg class="ic" style="left:266px;top:487px" width="16" height="16" viewBox="0 0 16 16"><path d="M.5.5h12l3 3v12H.5z" fill="#3a3934"/><rect x="3" y="3" width="9" height="9.3" fill="url(#gg)" stroke="#e6e6e6" stroke-width=".5"/><rect x="12" y="12.2" width="2.3" height="2.3" fill="#c9b98a"/><path d="M1.5 15.7h13M15.7 4v11" stroke="#b5a775" stroke-width=".7" stroke-dasharray="1 1"/></svg>
<span id="m22a" class="t" style="left:287px;top:486px;letter-spacing:-0.161px;">Intel(R) Atom(TM) CPU</span>
<span id="m22b" class="t" style="left:417px;top:486px;transform:scaleX(0.89);transform-origin:0 0;">Z3740</span>
<span id="m22c" class="t" style="left:453.5px;top:486px;transform:scaleX(0.9);transform-origin:0 0;">@ 1.33GHz</span>
<svg class="ic" style="left:235px;top:509.5px" width="7" height="10" viewBox="0 0 7 10"><path d="M.8 1l4.4 4-4.4 4z" fill="#fff" stroke="#8e8e8e" stroke-width="1" stroke-linejoin="round"/></svg>
<svg class="ic" style="left:247px;top:505px" width="16" height="16" viewBox="0 0 16 16"><path d="M8 1.5L1.5 8 8 14.5l3-3" fill="none" stroke="#44474b" stroke-width="2.2"/><path d="M8 1.5l3.5 3.5" stroke="#9a9ea3" stroke-width="2"/><path d="M7.5 8h8" stroke="#44474b" stroke-width="2"/></svg>
<span id="m23" class="t" style="left:268px;top:504px;letter-spacing:-0.218px;">Radiče pamäťových zariadení</span>
<svg class="ic" style="left:235px;top:527.5px" width="7" height="10" viewBox="0 0 7 10"><path d="M.8 1l4.4 4-4.4 4z" fill="#fff" stroke="#8e8e8e" stroke-width="1" stroke-linejoin="round"/></svg>
<svg class="ic" style="left:247px;top:523px" width="16" height="16" viewBox="0 0 16 16"><rect x="5.5" y=".8" width="5" height="4.7" fill="#e9ebed" stroke="#70767c" stroke-width=".8"/><path d="M4 5.5h8v5c0 2-1.5 3-3 3.5v1.5H7v-1.5c-1.5-.5-3-1.5-3-3.5z" fill="#4d5157" stroke="#2e3136" stroke-width=".8"/><path d="M5.5 6.5v4" stroke="#8a9097" stroke-width="1"/></svg>
<span id="m24" class="t" style="left:268px;top:522px;letter-spacing:-0.291px;">Radiče Univerzálnej sériovej zbernice</span>
<svg class="ic" style="left:235px;top:545.5px" width="7" height="10" viewBox="0 0 7 10"><path d="M.8 1l4.4 4-4.4 4z" fill="#fff" stroke="#8e8e8e" stroke-width="1" stroke-linejoin="round"/></svg>
<svg class="ic" style="left:247px;top:541px" width="16" height="16" viewBox="0 0 16 16"><rect x=".8" y="1.5" width="14.4" height="12" fill="#e4e8e0" stroke="#6f7a66" stroke-width=".9"/><rect x="2.5" y="3.2" width="9.5" height="8.6" fill="#d7d23a" stroke="#7e7a1c" stroke-width=".7"/><path d="M3.5 8l3-3v6l4-6" stroke="#fbf8b0" stroke-width="1.3" fill="none"/><path d="M13.7 3.5v8" stroke="#555e4d" stroke-width="1.2" stroke-dasharray="1.5 1"/></svg>
<span id="m25" class="t" style="left:268px;top:540px;letter-spacing:-0.405px;">Senzory</span>
<svg class="ic" style="left:235px;top:563.5px" width="7" height="10" viewBox="0 0 7 10"><path d="M.8 1l4.4 4-4.4 4z" fill="#fff" stroke="#8e8e8e" stroke-width="1" stroke-linejoin="round"/></svg>
<svg class="ic" style="left:247px;top:559px" width="16" height="16" viewBox="0 0 16 16"><rect x="6.5" y=".8" width="8.5" height="7" fill="#c9d5ee" stroke="#7f92bb" stroke-width=".8"/><rect x="8" y="2.2" width="5.5" height="4" fill="#4f74d0"/><rect x="1.5" y="3.5" width="8.5" height="7" fill="#d5dcea" stroke="#7f92bb" stroke-width=".8"/><rect x="3" y="5" width="5.5" height="4" fill="url(#gb)"/><path d="M5.8 10.5v3M8 10.5v3" stroke="#3c9a48" stroke-width="1.2"/><rect x=".5" y="13" width="15" height="2" fill="#4dae5a" stroke="#2f7d3a" stroke-width=".6"/></svg>
<span id="m26" class="t" style="left:268px;top:558px;letter-spacing:-0.242px;">Sieťové adaptéry</span>
<svg class="ic" style="left:235px;top:581.5px" width="7" height="10" viewBox="0 0 7 10"><path d="M.8 1l4.4 4-4.4 4z" fill="#fff" stroke="#8e8e8e" stroke-width="1" stroke-linejoin="round"/></svg>
<svg class="ic" style="left:247px;top:577px" width="16" height="16" viewBox="0 0 16 16"><path d="M4 1.5c0-1 8-1 8 0v12.5H4z" fill="#f5f6f7" stroke="#7d838a" stroke-width=".9"/><path d="M6.5 4.5c0-1 3-1 3 0v9h-3z" fill="#e2e5e8" stroke="#9aa0a6" stroke-width=".7"/><path d="M1.5 14.7h13" stroke="#33363a" stroke-width="1.3"/></svg>
<span id="m27" class="t" style="left:268px;top:576px;letter-spacing:-0.224px;">Softvérové zariadenia</span>
<svg class="ic" style="left:235px;top:599.5px" width="7" height="10" viewBox="0 0 7 10"><path d="M.8 1l4.4 4-4.4 4z" fill="#fff" stroke="#8e8e8e" stroke-width="1" stroke-linejoin="round"/></svg>
<svg class="ic" style="left:247px;top:595px" width="16" height="16" viewBox="0 0 16 16"><path d="M3 4h3.2v8H3z" fill="#5d6268"/><path d="M6.2 4L11 0v16L6.2 12z" fill="url(#gsp)" stroke="#8d9299" stroke-width=".5"/><path d="M4.5 4v8" stroke="#8a8f95" stroke-width=".8"/></svg>
<span id="m28" class="t" style="left:268px;top:594px;letter-spacing:-0.152px;">Sound, video and game controllers</span>
<svg class="ic" style="left:235px;top:617.5px" width="7" height="10" viewBox="0 0 7 10"><path d="M.8 1l4.4 4-4.4 4z" fill="#fff" stroke="#8e8e8e" stroke-width="1" stroke-linejoin="round"/></svg>
<svg class="ic" style="left:247px;top:613px" width="16" height="16" viewBox="0 0 16 16"><rect x="4.5" y=".8" width="11" height="9" fill="#d5dcea" stroke="#94a0b8"/><rect x="6" y="2.2" width="8" height="6" fill="url(#gb)"/><path d="M8.5 10h3.5v1.5H8.5zM6.5 11.5h7.5v1.5h-7.5z" fill="#aeb6c0"/><rect x=".8" y="5.5" width="2.5" height="8.5" fill="#dcdfd8" stroke="#6c716a" stroke-width=".8"/></svg>
<span id="m29" class="t" style="left:268px;top:612px;letter-spacing:-0.288px;">Systémové zariadenia</span>
<svg class="ic" style="left:235px;top:635.5px" width="7" height="10" viewBox="0 0 7 10"><path d="M.8 1l4.4 4-4.4 4z" fill="#fff" stroke="#8e8e8e" stroke-width="1" stroke-linejoin="round"/></svg>
<svg class="ic" style="left:247px;top:631px" width="16" height="16" viewBox="0 0 16 16"><path d="M2.5.8h5.5v13h-5.5z" fill="#f3f4f6" stroke="#858b92" stroke-width=".8"/><path d="M.5 14.7h9" stroke="#3a3d41" stroke-width="1.2"/><circle cx="11.5" cy="5" r="3.3" fill="#f6d45a" stroke="#b98a12" stroke-width="1"/><circle cx="12.3" cy="4.2" r="1" fill="#fff" stroke="#b98a12" stroke-width=".5"/><path d="M9.3 7L3.5 13l1.8.8 1.2-1.5" stroke="#d9a51c" stroke-width="1.8" fill="none"/></svg>
<span id="m30" class="t" style="left:268px;top:630px;letter-spacing:-0.271px;">Zabezpečovacie zariadenia</span>
<svg class="ic" style="left:235px;top:653.5px" width="7" height="10" viewBox="0 0 7 10"><path d="M.8 1l4.4 4-4.4 4z" fill="#fff" stroke="#8e8e8e" stroke-width="1" stroke-linejoin="round"/></svg>
<svg class="ic" style="left:247px;top:649px" width="16" height="16" viewBox="0 0 16 16"><path d="M.5.8h15l-3 3.7h-9z" fill="#565a60" stroke="#33363a" stroke-width=".6"/><rect x="1" y="4.5" width="14" height="3" fill="#dfe3e7" stroke="#8a9097" stroke-width=".7"/><rect x="1" y="5.5" width="5" height="1" fill="#4f9ad8"/><rect x="6" y="7.5" width="9.5" height="7.5" rx="1" fill="#6f7c8c" stroke="#3f4956" stroke-width=".8"/><circle cx="10.5" cy="11.3" r="2.4" fill="#e8edf2" stroke="#2c333c" stroke-width="1.1"/><rect x="13" y="8.5" width="1.5" height="1.2" fill="#e9eef3"/></svg>
<span id="m31" class="t" style="left:268px;top:648px;letter-spacing:-0.238px;">Zariadenia na spracovanie obrázkov</span>
<svg class="ic" style="left:235px;top:671.5px" width="7" height="10" viewBox="0 0 7 10"><path d="M.8 1l4.4 4-4.4 4z" fill="#fff" stroke="#8e8e8e" stroke-width="1" stroke-linejoin="round"/></svg>
<svg class="ic" style="left:247px;top:667px" width="16" height="16" viewBox="0 0 16 16"><rect x="1" y=".8" width="4.5" height="11.5" rx="1.2" fill="#f0f1f3" stroke="#50555b" stroke-width=".9"/><rect x="2" y="2.5" width="2.5" height="4" fill="#3a3d42"/><rect x="6.5" y="5" width="9" height="4.5" fill="#e6e8eb" stroke="#858b92" stroke-width=".7"/><path d="M7.5 6.3h7M7.5 8h7" stroke="#9aa0a6" stroke-width=".8" stroke-dasharray="1 .6"/><path d="M7.5 10h7.5c1 1.5 1 4 .3 5.5h-2l-1-2h-2l-1 2h-2c-.7-1.5-.7-4 .2-5.5z" fill="#4a78b8" stroke="#2a4f86" stroke-width=".7"/></svg>
<span id="m32" class="t" style="left:268px;top:666px;letter-spacing:-0.272px;">Zariadenia s rozhraním HID</span>
</div>
<div class="status"></div>
<div class="stsep" style="left:541px"></div><div class="stsep" style="left:675px"></div><div class="stsep" style="left:760px"></div>
</body></html>
